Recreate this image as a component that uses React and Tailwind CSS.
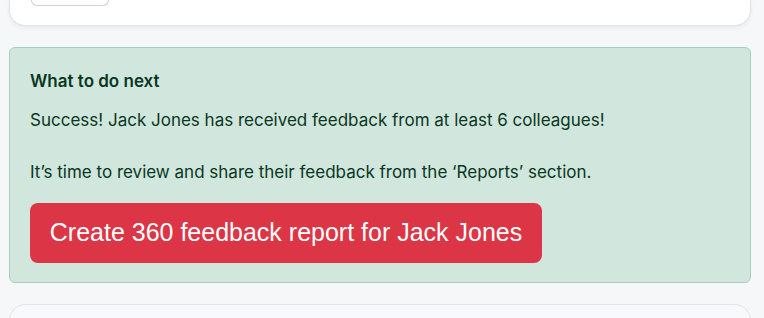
import React from 'react';

const App = () => {
    const name = 'Jack Jones';

    return (
        <div className="h-[318px] overflow-hidden bg-[#f6f7f9] pl-[9px] pr-[13px] font-['Inter',sans-serif] text-[#0a3622]">
            <div className="h-[26px] rounded-b-[16px] border-x border-b border-[#e2e4e8] bg-white shadow-[0_2px_4px_rgba(0,0,0,0.06)] pl-[21px]">
                <div className="h-[6px] w-[78px] rounded-b-[6px] border-x border-b border-[#cfd2d8]"></div>
            </div>

            <div className="mt-[21px] rounded-[6px] border border-[#a3cfbb] bg-[#d1e7dd] px-[20px] pt-[21px] pb-[19px]">
                <h4 className="text-[17px] leading-[25.5px] font-semibold">What to do next</h4>
                <p className="mt-[12px] text-[17px] leading-[26px]">
                    Success! {name} has received feedback from at least 6 colleagues!
                    <br />
                    <br />
                    It’s time to review and share their feedback from the ‘Reports’ section.
                </p>
                <button className="mt-[18px] h-[60px] w-[512px] rounded-[8px] bg-[#dc3545] text-center font-['Liberation_Sans',Arial,sans-serif] text-[25px] text-white">
                    Create 360 feedback report for {name}
                </button>
            </div>

            <div className="mt-[21px] h-[40px] rounded-t-[16px] border border-[#e2e4e8] bg-[#f8f9fa]"></div>
        </div>
    );
};

export default App;
